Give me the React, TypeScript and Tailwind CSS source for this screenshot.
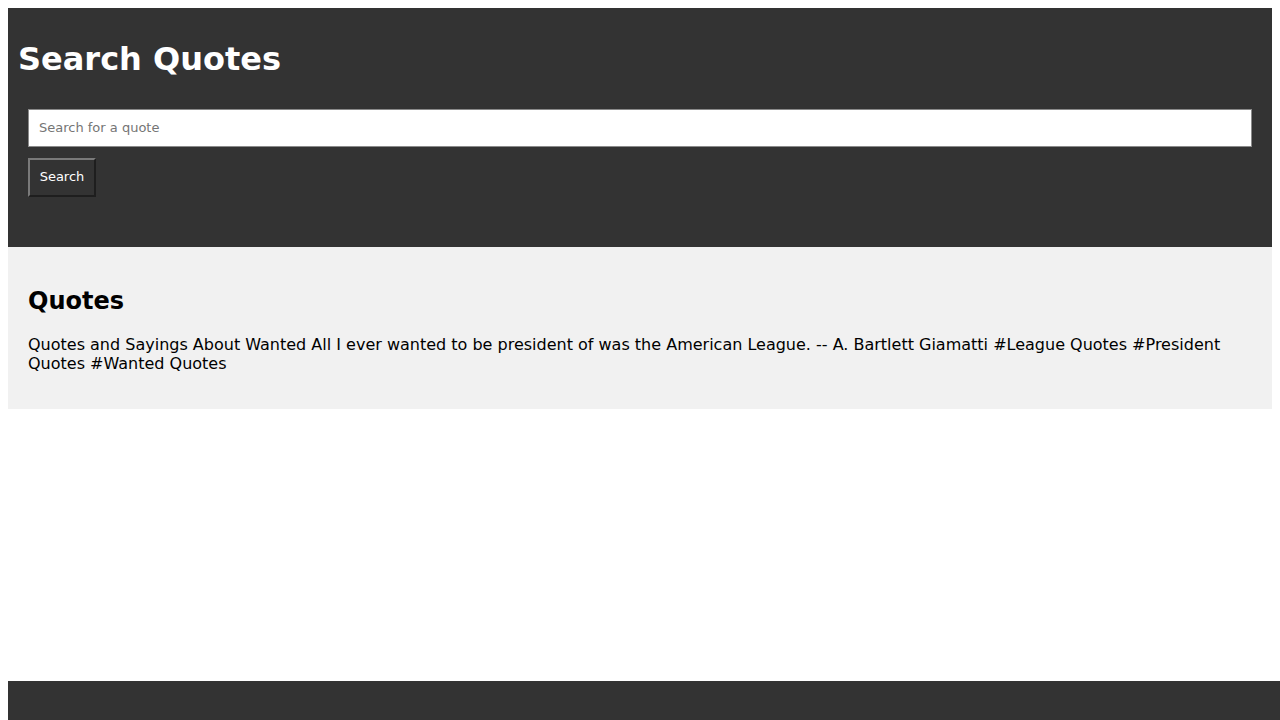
import React from 'react';

const App = () => {
  return (
    <div className="min-h-screen bg-white p-2 font-['DejaVu_Sans',sans-serif] text-black">
      {/* Header with search */}
      <header className="bg-[#333333] px-[10px] pt-[10px] pb-[40px] text-white">
        <h1 className="mt-[22.5px] mb-[21px] text-[32px] leading-[37px] font-bold">Search Quotes</h1>
        <form className="p-[10px]" onSubmit={(e) => e.preventDefault()}>
          <input
            type="text"
            placeholder="Search for a quote"
            className="mb-[11px] block h-[38px] w-full border border-[#8a8a8a] bg-white px-[10px] text-[13px] text-black placeholder:text-[#757575] outline-none"
          />
          <button
            type="submit"
            className="h-[39px] w-[68px] border-2 border-t-[#7a7a7a] border-l-[#7a7a7a] border-r-[#1e1e1e] border-b-[#1e1e1e] bg-[#333333] text-[13px] text-white"
          >
            Search
          </button>
        </form>
      </header>

      {/* Results */}
      <section className="bg-[#f1f1f1] px-5 pt-5 pb-5">
        <h2 className="mt-[20px] mb-[20px] text-2xl leading-[28px] font-bold">Quotes</h2>
        <p className="mb-4 text-base leading-[19px]">
          Quotes and Sayings About Wanted All I ever wanted to be president of was the American League. -- A. Bartlett Giamatti #League Quotes #President Quotes #Wanted Quotes
        </p>
      </section>

      <footer className="fixed bottom-0 left-2 h-[39px] w-full bg-[#333333]"></footer>
    </div>
  );
};

export default App;
